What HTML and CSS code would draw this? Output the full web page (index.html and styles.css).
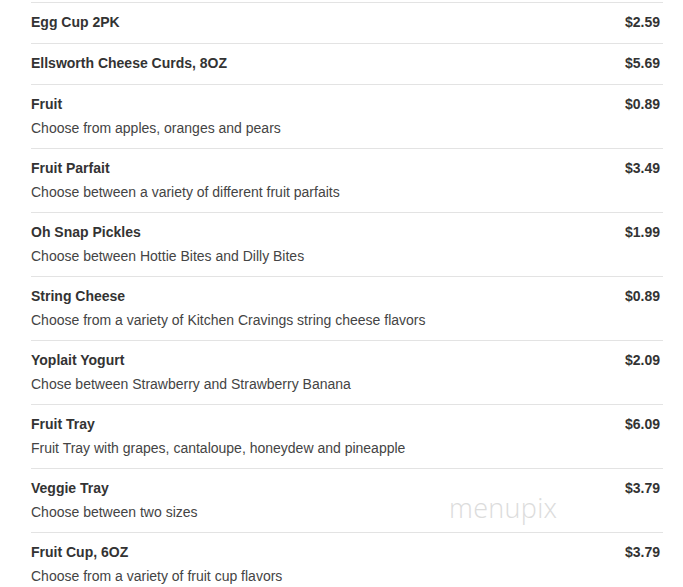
FILE: index.html
```html
<!DOCTYPE html>
<html>
<head>
<meta charset="utf-8">
<link rel="stylesheet" href="styles.css">
</head>
<body>
<div class="menu">
  <div class="item"><div class="info"><div class="name">Egg Cup 2PK</div></div><div class="price">$2.59</div></div>
  <div class="item"><div class="info"><div class="name">Ellsworth Cheese Curds, 8OZ</div></div><div class="price">$5.69</div></div>
  <div class="item"><div class="info"><div class="name">Fruit</div><div class="desc">Choose from apples, oranges and pears</div></div><div class="price">$0.89</div></div>
  <div class="item"><div class="info"><div class="name">Fruit Parfait</div><div class="desc">Choose between a variety of different fruit parfaits</div></div><div class="price">$3.49</div></div>
  <div class="item"><div class="info"><div class="name">Oh Snap Pickles</div><div class="desc">Choose between Hottie Bites and Dilly Bites</div></div><div class="price">$1.99</div></div>
  <div class="item"><div class="info"><div class="name">String Cheese</div><div class="desc">Choose from a variety of Kitchen Cravings string cheese flavors</div></div><div class="price">$0.89</div></div>
  <div class="item"><div class="info"><div class="name">Yoplait Yogurt</div><div class="desc">Chose between Strawberry and Strawberry Banana</div></div><div class="price">$2.09</div></div>
  <div class="item"><div class="info"><div class="name">Fruit Tray</div><div class="desc">Fruit Tray with grapes, cantaloupe, honeydew and pineapple</div></div><div class="price">$6.09</div></div>
  <div class="item"><div class="info"><div class="name">Veggie Tray</div><div class="desc">Choose between two sizes</div></div><div class="price">$3.79</div></div>
  <div class="item"><div class="info"><div class="name">Fruit Cup, 6OZ</div><div class="desc">Choose from a variety of fruit cup flavors</div></div><div class="price">$3.79</div></div>
</div>
<div class="watermark">menupix</div>
</body>
</html>
```
FILE: styles.css
```css
html, body {
  margin: 0;
  padding: 0;
  background: #ffffff;
  overflow: hidden;
}
body {
  font-family: "Liberation Sans", Arial, sans-serif;
  font-size: 14px;
  color: #333333;
  position: relative;
  height: 587px;
}
.menu {
  width: 632px;
  margin-left: 31px;
  padding-top: 2px;
}
.item {
  display: flex;
  justify-content: space-between;
  align-items: flex-start;
  border-top: 1px solid #e3e3e3;
  padding: 9px 3px 11px 0;
}
.name {
  font-weight: bold;
  line-height: 20px;
  color: #333333;
}
.desc {
  margin-top: 4px;
  margin-bottom: -1px;
  line-height: 20px;
  color: #444444;
}
.price {
  font-weight: bold;
  line-height: 20px;
  color: #333333;
}
.watermark {
  position: absolute;
  left: 449px;
  top: 489px;
  font-family: "Open Sans", sans-serif;
  font-weight: 300;
  font-size: 27px;
  letter-spacing: 0.3px;
  color: #dcdcdc;
}
```
